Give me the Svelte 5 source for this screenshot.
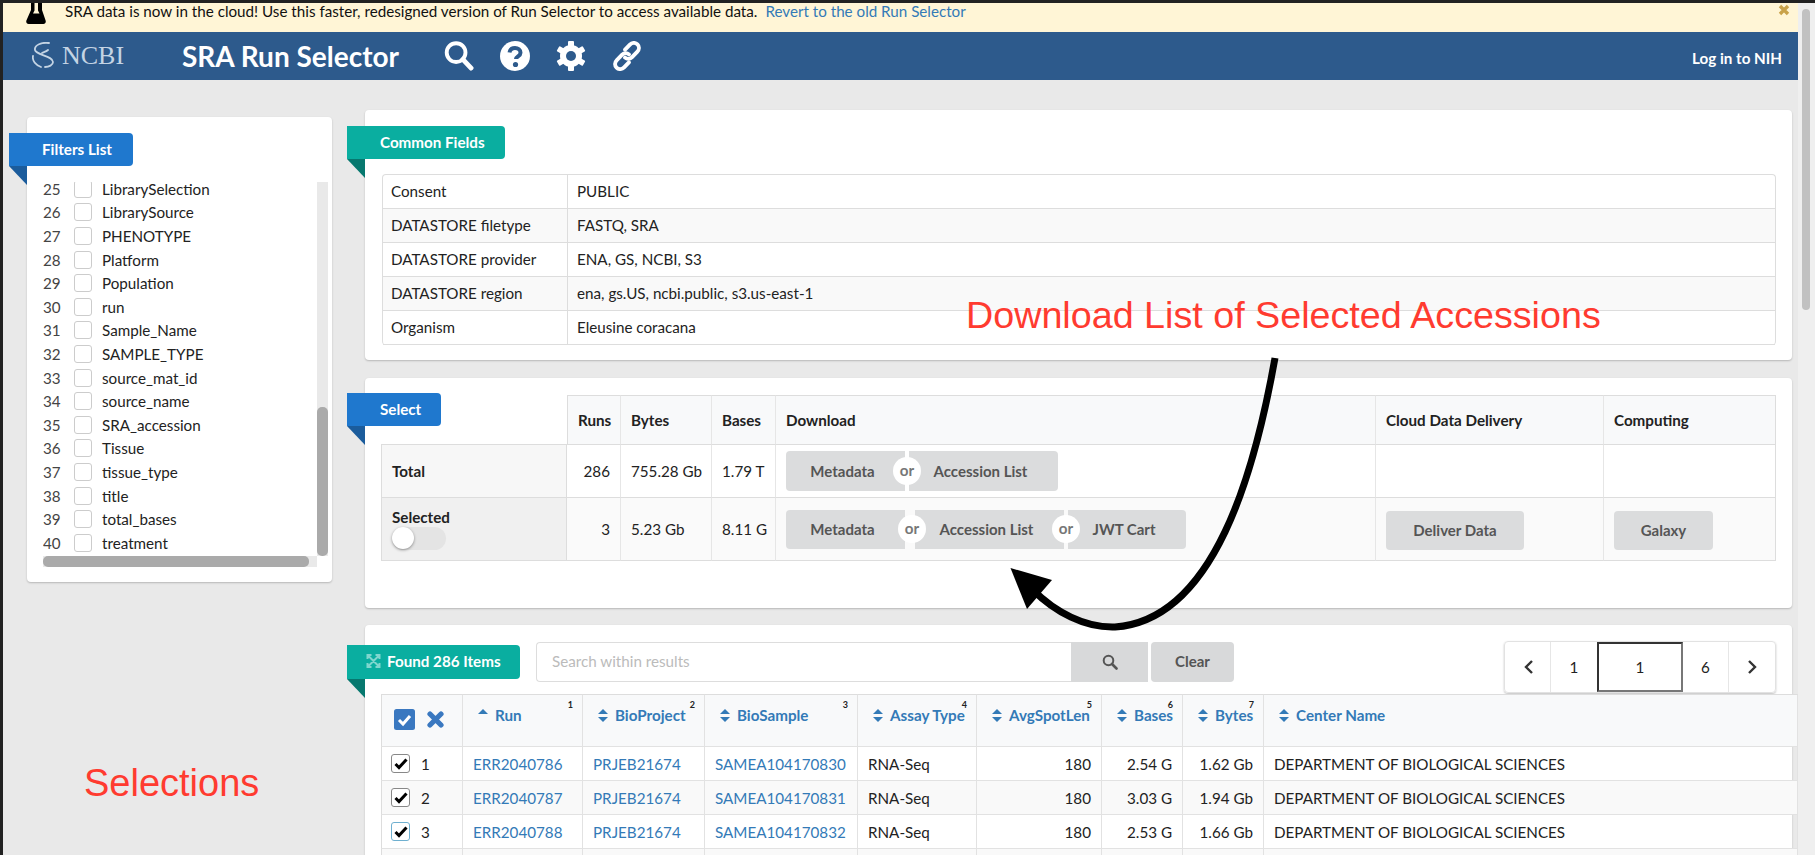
<script lang="ts">
  const filters = [
    [25, 'LibrarySelection'], [26, 'LibrarySource'], [27, 'PHENOTYPE'], [28, 'Platform'],
    [29, 'Population'], [30, 'run'], [31, 'Sample_Name'], [32, 'SAMPLE_TYPE'],
    [33, 'source_mat_id'], [34, 'source_name'], [35, 'SRA_accession'], [36, 'Tissue'],
    [37, 'tissue_type'], [38, 'title'], [39, 'total_bases'], [40, 'treatment'],
  ];

  const commonFields = [
    ['Consent', 'PUBLIC'],
    ['DATASTORE filetype', 'FASTQ, SRA'],
    ['DATASTORE provider', 'ENA, GS, NCBI, S3'],
    ['DATASTORE region', 'ena, gs.US, ncbi.public, s3.us-east-1'],
    ['Organism', 'Eleusine coracana'],
  ];

  const columns = [
    { name: 'Run', n: 1, width: 120 },
    { name: 'BioProject', n: 2, width: 122 },
    { name: 'BioSample', n: 3, width: 153 },
    { name: 'Assay Type', n: 4, width: 119 },
    { name: 'AvgSpotLen', n: 5, width: 125 },
    { name: 'Bases', n: 6, width: 81 },
    { name: 'Bytes', n: 7, width: 81 },
    { name: 'Center Name', n: 0, width: 534 },
  ];

  const runs = [
    { id: 1, run: 'ERR2040786', sample: 'SAMEA104170830', bases: '2.54 G', bytes: '1.62 Gb' },
    { id: 2, run: 'ERR2040787', sample: 'SAMEA104170831', bases: '3.03 G', bytes: '1.94 Gb' },
    { id: 3, run: 'ERR2040788', sample: 'SAMEA104170832', bases: '2.53 G', bytes: '1.66 Gb' },
  ];
</script>

<div class="page">
  <div class="viewport">
    <div class="banner">
      <svg class="beaker" viewBox="0 0 20 22"><path d="M5 0h11v8l3.600 10.500c.6 1.700-.4 3.500-2.200 3.500H2.600c-1.800 0-2.800-1.800-2.200-3.500L5 8zM8.500 0v8.500l-1.500 3h6.500l-1.500-3V0z" fill-rule="evenodd" fill="#000" /></svg>
      <span>SRA data is now in the cloud! Use this faster, redesigned version of Run Selector to access available data.</span>
      <a class="revert" href="#top">Revert to the old Run Selector</a>
      <svg class="banner-close" viewBox="0 0 12 12"><path d="M2 2l8 8M10 2l-8 8" stroke="#c9a24a" stroke-width="3.400" /></svg>
    </div>

    <header class="topbar">
      <div class="logo">
        <svg class="helix" viewBox="0 0 24 28" fill="none" stroke="#c4d4e4" stroke-width="1.800" stroke-linecap="round">
          <path d="M17 1C10 0 2 3 3 8C4 13 21 14 21 20C21 23 17 25 13 25" />
          <path d="M1 14C0 19 4 23 9 25" />
          <path d="M16 8C14 10 12 10 10 11" />
        </svg>
        <span>NCBI</span>
      </div>
      <h1>SRA Run Selector</h1>
      <nav class="tools">
        <svg viewBox="0 0 30 31" fill="none" stroke="#fff"><circle cx="12" cy="12" r="9.700" stroke-width="4" /><path d="M19 19l8.500 9" stroke-width="5" stroke-linecap="round" /></svg>
        <svg viewBox="0 0 30 30"><circle cx="15" cy="15" r="15" fill="#fff" /><path d="M9.500 11.500C10 8.500 12.500 7 15 7c3 0 5.500 2 5.500 4.700 0 3.600-4.500 3.600-4.500 6.300" fill="none" stroke="#2d5a8c" stroke-width="4" /><circle cx="15.500" cy="23.500" r="2.600" fill="#2d5a8c" /></svg>
        <svg viewBox="0 0 30 30">
          <g fill="#fff">
            <rect x="12" y="0" width="6" height="30" rx="1" />
            <rect x="12" y="0" width="6" height="30" rx="1" transform="rotate(60 15 15)" />
            <rect x="12" y="0" width="6" height="30" rx="1" transform="rotate(120 15 15)" />
            <circle cx="15" cy="15" r="11" />
          </g>
          <circle cx="15" cy="15" r="5" fill="#2d5a8c" />
        </svg>
        <svg viewBox="0 0 31 31" fill="none" stroke="#fff" stroke-width="4" stroke-linecap="round">
          <path d="M13.500 9l5-5.200c2.400-2.400 5.700-2.400 7.800-.3s2.100 5.400-.3 7.800l-5.500 5.500c-2.200 2.200-5 2.200-7 .4" />
          <path d="M17.500 22l-5 5.200c-2.400 2.400-5.700 2.400-7.800.3s-2.100-5.400.3-7.800l5.500-5.500c2.200-2.200 5-2.200 7-.4" />
        </svg>
      </nav>
      <a class="login" href="#top">Log in to NIH</a>
    </header>

    <main class="layout">
      <aside class="card filters">
        <div class="ribbon blue">Filters List</div>
        <div class="filter-scroll">
          <div class="filter-clip">
            <ul class="filter-list">
              {#each filters as [num, label]}
                <li>
                  <span class="filter-num">{num}</span>
                  <span class="box"></span>
                  <span>{label}</span>
                </li>
              {/each}
            </ul>
          </div>
          <div class="vtrack"><div class="vthumb"></div></div>
          <div class="htrack"><div class="hthumb"></div></div>
        </div>
      </aside>

      <div class="content">
        <section class="card common">
          <div class="ribbon teal">Common Fields</div>
          <table class="fields">
            <colgroup><col style="width:185px" /><col /></colgroup>
            <tbody>
              {#each commonFields as [key, value]}
                <tr><td>{key}</td><td>{value}</td></tr>
              {/each}
            </tbody>
          </table>
        </section>

        <section class="card select">
          <div class="ribbon blue">Select</div>
          <table class="summary">
            <colgroup>
              <col style="width:186px" /><col style="width:54px" /><col style="width:91px" /><col style="width:64px" />
              <col style="width:600px" /><col style="width:228px" /><col style="width:172px" />
            </colgroup>
            <thead>
              <tr>
                <th class="blank"></th>
                <th>Runs</th><th>Bytes</th><th>Bases</th><th>Download</th><th>Cloud Data Delivery</th><th>Computing</th>
              </tr>
            </thead>
            <tbody>
              <tr class="total">
                <td class="rowhead"><b>Total</b></td>
                <td class="num">286</td>
                <td>755.28 Gb</td>
                <td>1.79 T</td>
                <td>
                  <div class="btn-group">
                    <span class="btn first">Metadata</span>
                    <span class="or">or</span>
                    <span class="btn last wide">Accession List</span>
                  </div>
                </td>
                <td></td>
                <td></td>
              </tr>
              <tr class="selected">
                <td class="rowhead">
                  <b>Selected</b>
                  <div class="toggle"><span></span></div>
                </td>
                <td class="num">3</td>
                <td>5.23 Gb</td>
                <td>8.11 G</td>
                <td>
                  <div class="btn-group short">
                    <span class="btn first">Metadata</span>
                    <span class="or shifted">or</span>
                    <span class="btn mid">Accession List</span>
                    <span class="or">or</span>
                    <span class="btn last cart">JWT Cart</span>
                  </div>
                </td>
                <td><span class="btn solo deliver">Deliver Data</span></td>
                <td><span class="btn solo galaxy">Galaxy</span></td>
              </tr>
            </tbody>
          </table>
        </section>

        <section class="card found">
          <div class="ribbon teal">
            <svg class="expand" viewBox="0 0 14 14" fill="none" stroke="#7fd6ce" stroke-width="2"><path d="M1 5V1h4M9 1h4v4M13 9v4H9M5 13H1V9M1 1l12 12M13 1L1 13" /></svg>
            Found 286 Items
          </div>
          <div class="toolbar">
            <div class="search">
              <div class="search-input">Search within results</div>
              <div class="search-btn">
                <svg viewBox="0 0 16 16" fill="none" stroke="#555"><circle cx="6.500" cy="6.500" r="4.800" stroke-width="2" /><path d="M10 10l4.500 4.500" stroke-width="2.600" stroke-linecap="round" /></svg>
              </div>
              <div class="clear">Clear</div>
            </div>
            <div class="pager">
              <span class="page-cell arrow prev">
                <svg viewBox="0 0 10 16" fill="none" stroke="#333" stroke-width="2.400"><path d="M8 2L2 8l6 6" /></svg>
              </span>
              <span class="page-cell">1</span>
              <span class="page-input">1</span>
              <span class="page-cell">6</span>
              <span class="page-cell arrow last-cell">
                <svg viewBox="0 0 10 16" fill="none" stroke="#333" stroke-width="2.400"><path d="M2 2l6 6-6 6" /></svg>
              </span>
            </div>
          </div>

          <table class="results">
            <colgroup>
              <col style="width:82px" />
              {#each columns as col}
                <col style="width:{col.width}px" />
              {/each}
            </colgroup>
            <thead>
              <tr>
                <th class="pick">
                  <span class="pick-inner">
                    <svg class="check-all" viewBox="0 0 21 21"><rect width="21" height="21" rx="2.500" fill="#3a78c0" /><path d="M5 11l4 4 7-8" fill="none" stroke="#fff" stroke-width="3" /></svg>
                    <svg class="clear-all" viewBox="0 0 17 17"><path d="M3 3l11 11M14 3L3 14" stroke="#3a78c0" stroke-width="5.200" stroke-linecap="round" /></svg>
                  </span>
                </th>
                {#each columns as col}
                  <th>
                    <span class="head">
                      <svg class="sort" viewBox="0 0 12 18">
                        <path d="M6 3l5 5H1z" fill="#337ab7" />
                        {#if col.name !== 'Run'}
                          <path d="M6 16l5-5H1z" fill="#337ab7" />
                        {/if}
                      </svg>
                      {col.name}
                    </span>
                    {#if col.n}
                      <sup class="order">{col.n}</sup>
                    {/if}
                  </th>
                {/each}
              </tr>
            </thead>
            <tbody>
              {#each runs as row}
                <tr>
                  <td class="pick">
                    <span class="pick-row">
                      <span class="tick" class:focus={row.id === 3}>
                        <svg viewBox="0 0 14 12"><path d="M1.500 6l3.500 3.500 7.500-8" fill="none" stroke="#000" stroke-width="3" /></svg>
                      </span>
                      {row.id}
                    </span>
                  </td>
                  <td><a href="#top">{row.run}</a></td>
                  <td><a href="#top">PRJEB21674</a></td>
                  <td><a href="#top">{row.sample}</a></td>
                  <td>RNA-Seq</td>
                  <td class="num">180</td>
                  <td class="num">{row.bases}</td>
                  <td class="num">{row.bytes}</td>
                  <td>DEPARTMENT OF BIOLOGICAL SCIENCES</td>
                </tr>
              {/each}
              <tr>
                <td></td><td></td><td></td><td></td><td></td><td></td><td></td><td></td><td></td>
              </tr>
            </tbody>
          </table>
        </section>
      </div>
    </main>
  </div>

  <div class="gutter"><div class="gutter-thumb"></div></div>

  <!-- hand-drawn notes on top of the page -->
  <div class="note note-download">Download List of Selected Accessions</div>
  <div class="note note-selections">Selections</div>
  <svg class="arrow-note" viewBox="0 0 1815 855">
    <path d="M1275 358C1255 470 1215 620 1115 627C1085 628 1055 612 1033 590" fill="none" stroke="#000" stroke-width="7" />
    <path d="M1010.500 568L1052 580L1027 609Z" fill="#000" />
  </svg>
</div>

<style>
  :global(body) {
    margin: 0;
    background: #222;
    overflow: hidden;
  }

  .page {
    position: relative;
    display: flex;
    width: 1815px;
    height: 855px;
    box-sizing: border-box;
    padding: 3px 0 0 3px;
    overflow: hidden;
    background: #222;
    font-family: Lato, "Open Sans", sans-serif;
    font-size: 15.2px;
    color: #222;
  }

  .viewport {
    width: 1795px;
    flex: none;
    background: #e9e9e9;
  }

  .gutter {
    flex: 1;
    background: #efefef;
    padding: 6px 5px 0 4px;
    box-sizing: border-box;
  }

  .gutter-thumb {
    height: 301px;
    border-radius: 4px;
    background: #c1c1c1;
  }

  .banner {
    display: flex;
    align-items: flex-start;
    height: 29px;
    background: #fff5d6;
    box-sizing: border-box;
    padding-left: 23px;
    overflow: hidden;
    line-height: 17px;
    color: #111;
  }

  .beaker {
    width: 20px;
    height: 22px;
    margin-top: -1px;
    margin-right: 19px;
    flex: none;
  }

  .revert {
    margin-left: 8px;
    color: #337ab7;
    text-decoration: none;
  }

  .banner-close {
    width: 12px;
    height: 12px;
    margin-left: auto;
    margin-right: 8px;
    margin-top: 1px;
  }

  .topbar {
    display: flex;
    align-items: center;
    height: 48px;
    background: #2d5a8c;
  }

  .logo {
    display: flex;
    align-items: center;
    width: 150px;
    margin-left: 29px;
    font-family: "Liberation Serif", serif;
    font-size: 26px;
    color: #c4d4e4;
  }

  .helix {
    width: 24px;
    height: 28px;
    margin-right: 6px;
  }

  h1 {
    margin: 0;
    font-size: 28px;
    font-weight: 700;
    color: #fff;
    width: 262px;
  }

  .tools {
    display: flex;
    align-items: center;
    gap: 26px;
  }

  .tools svg {
    width: 30px;
    height: 30px;
  }

  .login {
    margin-left: auto;
    margin-right: 16px;
    margin-top: 3px;
    color: #fff;
    font-weight: 700;
    text-decoration: none;
  }

  .layout {
    display: flex;
    align-items: flex-start;
    gap: 33px;
    padding: 30px 0 0 24px;
  }

  .card {
    position: relative;
    background: #fff;
    border-radius: 4px;
    box-shadow: 0 1px 2px rgba(0, 0, 0, 0.22);
    box-sizing: border-box;
  }

  .ribbon {
    position: absolute;
    left: -18px;
    display: flex;
    align-items: center;
    gap: 6px;
    height: 33px;
    box-sizing: border-box;
    padding: 0 16px 2px 33px;
    border-radius: 0 4px 4px 0;
    color: #fff;
    font-weight: 700;
    white-space: nowrap;
  }

  .ribbon::after {
    content: '';
    position: absolute;
    left: 0;
    top: 100%;
    border-style: solid;
    border-width: 19px 0 0 18px;
    border-color: transparent;
  }

  .ribbon.blue {
    background: #1f78ce;
  }

  .ribbon.blue::after {
    border-top-color: #1b5c9c;
  }

  .ribbon.teal {
    background: #0aaea0;
  }

  .ribbon.teal::after {
    border-top-color: #07786f;
  }

  .filters {
    width: 305px;
    height: 465px;
    margin-top: 7px;
    padding: 65px 4px 0 16px;
  }

  .filters .ribbon {
    top: 16px;
    width: 124px;
  }

  .filter-scroll {
    display: grid;
    grid-template-columns: 274px 11px;
    grid-template-rows: 374px 11px;
  }

  .filter-clip {
    overflow: hidden;
  }

  .filter-list {
    list-style: none;
    margin: -5px 0 0;
    padding: 0;
  }

  .filter-list li {
    display: flex;
    align-items: center;
    height: 23.6px;
  }

  .filter-num {
    width: 31px;
    color: #444;
  }

  .box {
    width: 18px;
    height: 18px;
    box-sizing: border-box;
    border: 1px solid #ccc;
    border-radius: 3px;
    margin-right: 10px;
    background: #fff;
  }

  .vtrack {
    background: #e9e9e9;
    padding-top: 225px;
  }

  .vthumb {
    height: 149px;
    border-radius: 5px;
    background: #aaa;
  }

  .htrack {
    background: #e9e9e9;
  }

  .hthumb {
    width: 266px;
    height: 11px;
    border-radius: 5px;
    background: #aaa;
  }

  .content {
    display: flex;
    flex-direction: column;
    gap: 18px;
    width: 1427px;
  }

  .common {
    height: 250px;
    padding: 64px 16px 0 17px;
  }

  .common .ribbon {
    top: 16px;
    width: 158px;
  }

  table {
    border-collapse: separate;
    border-spacing: 0;
    table-layout: fixed;
  }

  .fields {
    width: 1394px;
    border: 1px solid #ddd;
    border-bottom: 0;
    border-radius: 4px;
  }

  .fields td {
    height: 32px;
    padding: 0 9px 1px;
    border-bottom: 1px solid #ddd;
    box-sizing: content-box;
  }

  .fields td:first-child {
    padding-left: 8px;
    border-right: 1px solid #ddd;
  }

  .fields tr:nth-child(even) td {
    background: #f9f9f9;
  }

  .select {
    height: 230px;
    padding: 17px 16px 0 16px;
  }

  .select .ribbon {
    top: 15px;
    width: 94px;
  }

  .summary {
    width: 1395px;
  }

  .summary th,
  .summary td {
    padding: 0 10px;
    border-right: 1px solid #e6e6e6;
    border-bottom: 1px solid #ddd;
    box-sizing: border-box;
    text-align: left;
    white-space: nowrap;
  }

  .summary th {
    height: 50px;
    background: #f8f9fa;
    border-top: 1px solid #ddd;
    font-weight: 700;
  }

  .summary th:nth-child(2) {
    border-left: 1px solid #ddd;
  }

  .summary th:last-child,
  .summary td:last-child {
    border-right: 1px solid #ddd;
  }

  .summary th.blank {
    background: none;
    border: 0;
    border-bottom: 1px solid #ddd;
  }

  .total td {
    height: 53px;
  }

  .selected td {
    height: 63px;
    background: #fafafa;
  }

  .summary td.rowhead {
    border-left: 1px solid #ddd;
    border-right: 1px solid #ddd;
    background: #f7f7f7;
  }

  .selected td.rowhead {
    background: #f0f0f0;
  }

  .num {
    text-align: right !important;
  }

  .toggle {
    position: relative;
    width: 54px;
    height: 23px;
    margin-top: 1px;
    border-radius: 12px;
    background: #e4e4e4;
  }

  .toggle span {
    position: absolute;
    left: 0;
    top: 0;
    width: 22px;
    height: 22px;
    border-radius: 50%;
    background: #fff;
    box-shadow: 0 1px 3px rgba(0, 0, 0, 0.4);
  }

  .btn-group {
    position: relative;
    display: flex;
    height: 40px;
    gap: 2px;
    align-items: stretch;
  }

  .btn-group.short {
    height: 39px;
  }

  .btn {
    display: flex;
    align-items: center;
    justify-content: center;
    box-sizing: border-box;
    background: #dbdcdd;
    color: #555;
    font-size: 15px;
    font-weight: 700;
  }

  .btn.first {
    width: 119px;
    padding-right: 6px;
    border-radius: 4px 0 0 4px;
  }

  .btn.wide {
    width: 149px;
    padding-right: 6px;
    border-radius: 0 4px 4px 0;
  }

  .btn.mid {
    width: 149px;
    margin-left: 6px;
    padding-right: 6px;
  }

  .btn.cart {
    width: 118px;
    padding-right: 6px;
    border-radius: 0 4px 4px 0;
  }

  .or {
    position: relative;
    z-index: 1;
    flex: none;
    align-self: center;
    width: 28px;
    height: 28px;
    margin: 0 -14px;
    border-radius: 50%;
    background: #fff;
    color: #777;
    font-weight: 700;
    text-align: center;
    line-height: 27px;
  }

  .or.shifted {
    transform: translateX(5px);
  }

  .btn.solo {
    display: inline-flex;
    height: 39px;
    padding-bottom: 2px;
    border-radius: 4px;
    margin-top: 3px;
  }

  .deliver {
    width: 138px;
  }

  .galaxy {
    width: 99px;
  }

  .found {
    height: 300px;
    margin-top: -1px;
    padding: 16px 16px 0 16px;
  }

  .found .ribbon {
    top: 20px;
    height: 34px;
    width: 173px;
    padding: 0 0 2px 19px;
    gap: 6px;
  }

  .expand {
    width: 15px;
    height: 14px;
    flex: none;
  }

  .toolbar {
    display: flex;
    justify-content: space-between;
    align-items: flex-start;
    height: 53px;
    padding-left: 155px;
  }

  .search {
    display: flex;
    height: 40px;
    margin-top: 1px;
  }

  .search-input {
    display: flex;
    align-items: center;
    width: 535px;
    box-sizing: border-box;
    padding: 0 0 2px 15px;
    border: 1px solid #ddd;
    border-right: 0;
    border-radius: 4px 0 0 4px;
    color: #bbb;
  }

  .search-btn {
    display: flex;
    align-items: center;
    justify-content: center;
    width: 77px;
    background: #d8d9da;
  }

  .search-btn svg {
    width: 16px;
    height: 16px;
  }

  .clear {
    display: flex;
    align-items: center;
    justify-content: center;
    box-sizing: border-box;
    width: 83px;
    margin-left: 3px;
    padding-bottom: 2px;
    background: #d8d9da;
    border-radius: 4px;
    color: #555;
    font-size: 15px;
    font-weight: 700;
  }

  .pager {
    display: flex;
    height: 52px;
    box-sizing: border-box;
    border: 1px solid #e2e2e2;
    border-radius: 4px;
    box-shadow: 0 1px 2px rgba(0, 0, 0, 0.25);
  }

  .page-cell {
    display: flex;
    align-items: center;
    justify-content: center;
    width: 46px;
    border-right: 1px solid #e6e6e6;
  }

  .page-cell.prev {
    box-sizing: border-box;
    padding-left: 3px;
  }

  .page-cell.last-cell {
    border-right: 0;
  }

  .page-cell svg {
    width: 10px;
    height: 16px;
  }

  .page-input {
    display: flex;
    align-items: center;
    justify-content: center;
    width: 86px;
    box-sizing: border-box;
    margin-left: -1px;
    border: 2px solid;
    border-color: #333 #777 #777 #333;
  }

  .page-input + .page-cell {
    width: 45px;
  }

  .results {
    width: 1417px;
  }

  .results th,
  .results td {
    position: relative;
    padding: 0 10px;
    box-sizing: border-box;
    border-right: 1px solid #e2e2e2;
    border-bottom: 1px solid #e2e2e2;
    text-align: left;
    white-space: nowrap;
  }

  .results th:first-child,
  .results td:first-child {
    border-left: 1px solid #ddd;
  }

  .results th {
    height: 53px;
    background: #f8f9fa;
    border-top: 1px solid #ddd;
    vertical-align: top;
    font-weight: 700;
    color: #337ab7;
  }

  .results td {
    height: 34px;
    color: #222;
  }

  .results .pick {
    padding-left: 9px;
  }

  .results tbody tr:nth-child(even) td {
    background: #f9f9f9;
  }

  .results a {
    color: #337ab7;
    text-decoration: none;
  }

  .head {
    display: flex;
    align-items: center;
    gap: 6px;
    margin-top: 11px;
    margin-left: 4px;
  }

  .sort {
    width: 12px;
    height: 18px;
    flex: none;
  }

  .order {
    position: absolute;
    top: 5px;
    right: 9px;
    font-size: 9px;
    line-height: 10px;
    color: #222;
    vertical-align: baseline;
  }

  .pick-inner {
    display: flex;
    align-items: center;
    gap: 12px;
    margin-top: 14px;
    margin-left: 3px;
  }

  .check-all {
    width: 21px;
    height: 21px;
  }

  .clear-all {
    width: 17px;
    height: 17px;
  }

  .pick-row {
    display: flex;
    align-items: center;
    gap: 11px;
  }

  .tick {
    display: flex;
    align-items: center;
    justify-content: center;
    width: 19px;
    height: 19px;
    box-sizing: border-box;
    border: 1px solid #888;
    border-radius: 3px;
    background: #fff;
  }

  .tick.focus {
    border-color: #6fb0d0;
  }

  .tick svg {
    width: 14px;
    height: 12px;
  }

  .note {
    position: absolute;
    font-family: "Liberation Sans", Arial, sans-serif;
    color: #ff3b30;
    white-space: nowrap;
    line-height: 1;
  }

  .note-download {
    left: 966px;
    top: 297px;
    font-size: 37.7px;
  }

  .note-selections {
    left: 84px;
    top: 764px;
    font-size: 38px;
  }

  .arrow-note {
    position: absolute;
    left: 0;
    top: 0;
    width: 1815px;
    height: 855px;
    pointer-events: none;
  }
</style>
